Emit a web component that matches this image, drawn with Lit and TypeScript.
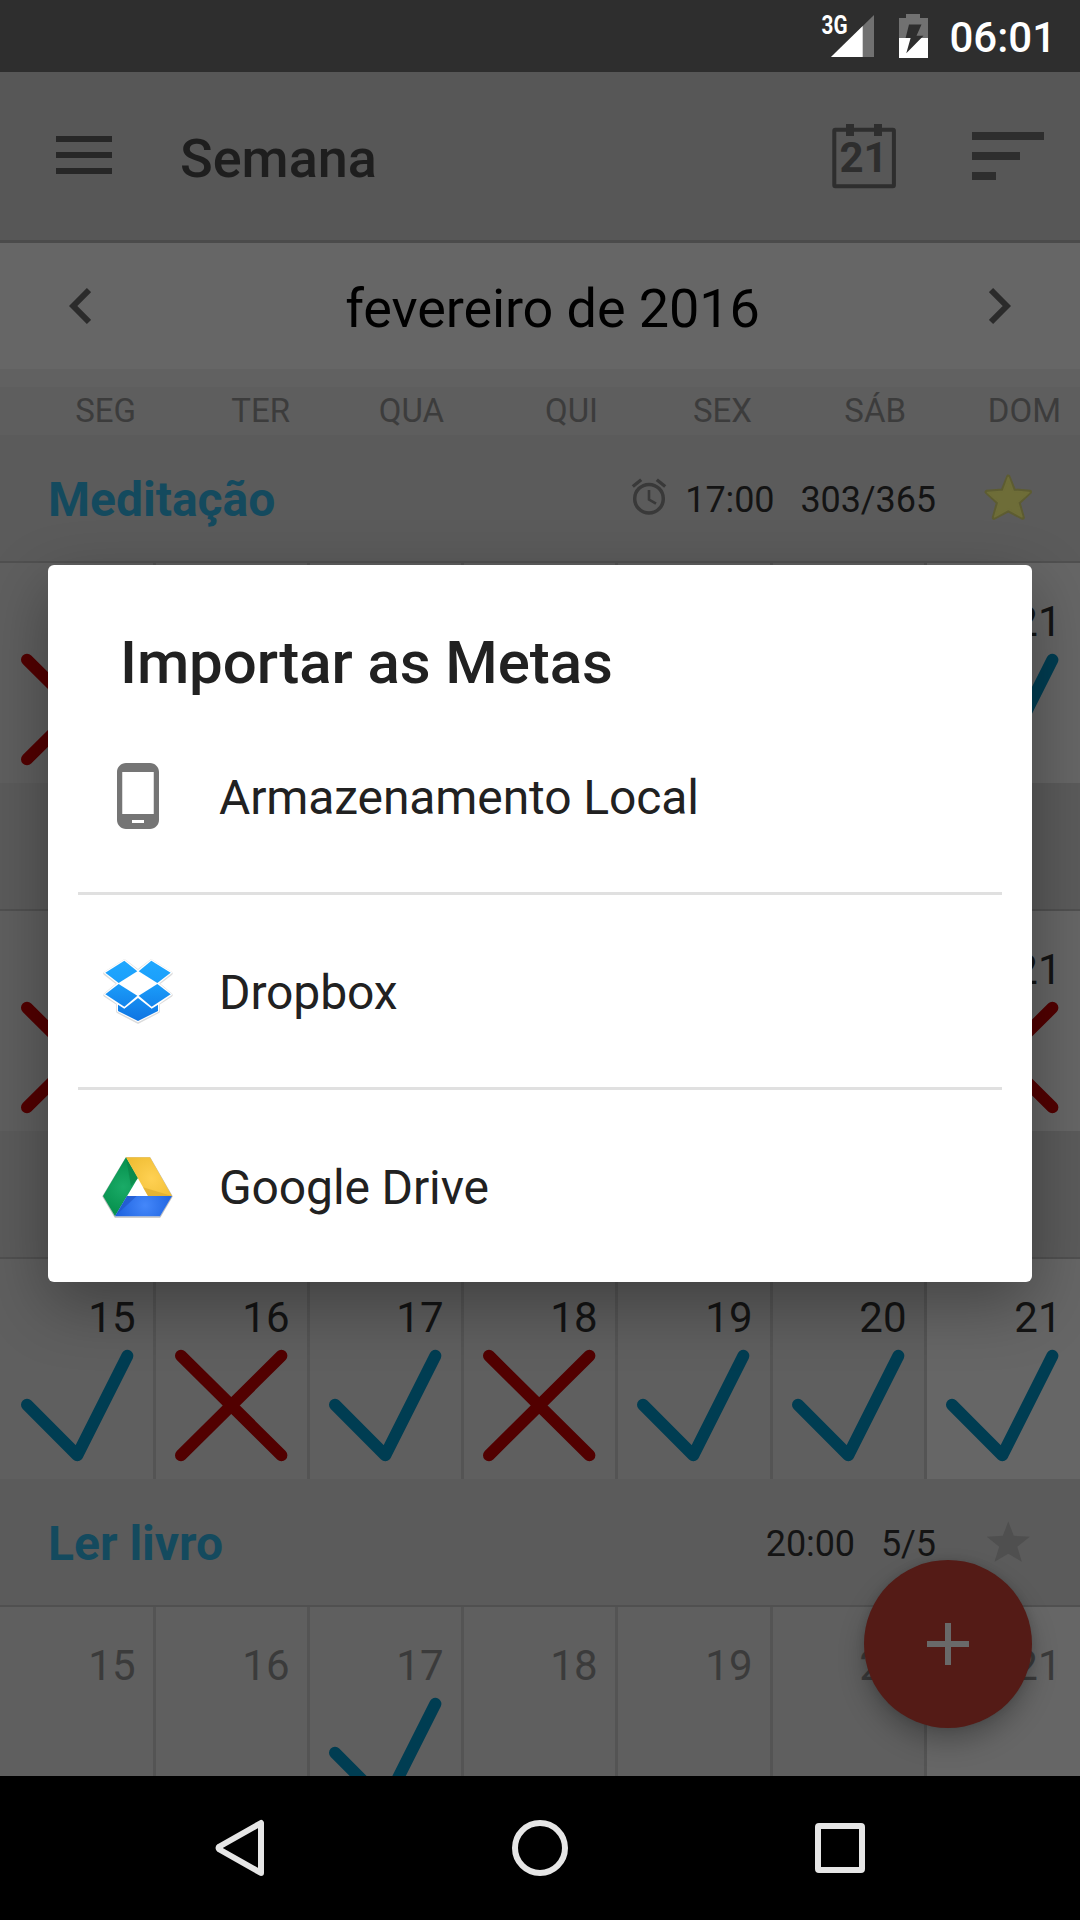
import { LitElement, html, css, svg, nothing } from "lit";
import { customElement, property } from "lit/decorators.js";
import { classMap } from "lit/directives/class-map.js";

type Mark = "check" | "cross" | "none";

interface Day {
  label: string;
  mark: Mark;
}

interface Goal {
  name: string;
  time: string;
  count: string;
  alarm: boolean;
  star: "on" | "off" | "none";
  muted: boolean;
  days: Day[];
}

const day = (label = "", mark: Mark = "none"): Day => ({ label, mark });

const GOALS: Goal[] = [
  {
    name: "Meditação", time: "17:00", count: "303/365", alarm: true, star: "on", muted: false,
    days: [day("", "cross"), day(), day(), day(), day(), day(), day("21", "check")],
  },
  {
    name: "", time: "", count: "", alarm: false, star: "none", muted: false,
    days: [day("", "cross"), day(), day(), day(), day(), day(), day("21", "cross")],
  },
  {
    name: "", time: "", count: "", alarm: false, star: "none", muted: false,
    days: [
      day("15", "check"), day("16", "cross"), day("17", "check"), day("18", "cross"),
      day("19", "check"), day("20", "check"), day("21", "check"),
    ],
  },
  {
    name: "Ler livro", time: "20:00", count: "5/5", alarm: false, star: "off", muted: true,
    days: [day("15"), day("16"), day("17", "check"), day("18"), day("19"), day("20"), day("21")],
  },
];

const WEEKDAYS = ["SEG", "TER", "QUA", "QUI", "SEX", "SÁB", "DOM"];

@customElement("status-bar")
export class StatusBar extends LitElement {
  static styles = css`
    :host { display: flex; height: 72px; flex: none; background: #2e2e2e; color: #fff; justify-content: flex-end;
      align-items: center; box-sizing: border-box; padding-right: 24px; font-family: Roboto, sans-serif; }
    .icons { display: block; width: 110px; height: 72px; margin-right: 19px; }
    .net { font: 700 25px Roboto, sans-serif; fill: #fff; }
    .clock { font-size: 42px; font-weight: 500; line-height: 68px; padding-top: 4px; }
  `;
  render() {
    return html`
      <svg class="icons" viewBox="820 0 110 72">
        <path d="M874 15V57H831Z" fill="#717171" />
        <path d="M862.7 26V57H831Z" fill="#fff" />
        <text class="net" x="821.5" y="33.5" textLength="26" lengthAdjust="spacingAndGlyphs">3G</text>
        <path d="M899 18h7v-4h14v4h8v20h-29z" fill="#717171" />
        <path d="M899 38h29v20h-29z" fill="#fff" />
        <path d="M909 24.5h12.5l-5 11.3h7L906.3 53.3l4.3-15.3h-5z" fill="#2e2e2e" />
      </svg>
      <div class="clock">06:01</div>
    `;
  }
}

@customElement("day-cell")
export class DayCell extends LitElement {
  @property({ attribute: false }) day: Day = day();
  @property({ type: Boolean }) muted = false;
  static styles = css`
    :host { display: block; height: 220px; font-family: Roboto, sans-serif; }
    .number { height: 95px; box-sizing: border-box; padding: 34px 18.5px 0 0; text-align: right;
      font-size: 42px; line-height: 50px; color: #141414; }
    .muted { color: #3b3b3b; }
    .mark { display: block; width: 154px; height: 125px; overflow: visible; fill: none; stroke-width: 12;
      stroke-linecap: round; stroke-linejoin: round; }
    .check { stroke: #003d52; }
    .cross { stroke: #520000; }
  `;
  render() {
    const { label, mark } = this.day;
    return html`
      <div class=${classMap({ number: true, muted: this.muted })}>${label}</div>
      ${mark === "none" ? nothing : html`
        <svg class=${"mark " + mark} viewBox="0 94 154 125">
          ${mark === "check"
            ? svg`<path d="M27 144.7L77.3 195.3L127.4 95.8" />`
            : svg`<path d="M27 95.8L127.4 195.2M127.4 95.8L27 195.2" />`}
        </svg>`}
    `;
  }
}

@customElement("goal-section")
export class GoalSection extends LitElement {
  @property({ attribute: false }) goal!: Goal;
  static styles = css`
    :host { display: block; font-family: Roboto, sans-serif; }
    .head { display: flex; align-items: center; height: 126px; background: #5b5b5b;
      border-bottom: 2px solid #505050; padding: 0 48px; }
    .name { flex: 1; font-size: 48px; font-weight: 700; color: #144a5e; padding-top: 2px; }
    .alarm { width: 36px; height: 40px; margin-right: 18px; }
    .time, .count { font-size: 36px; color: #141414; padding-top: 4px; letter-spacing: -0.1px; }
    .count { margin-left: 26px; }
    .star { width: 48px; height: 48px; margin-left: 48px; padding-top: 2px; overflow: visible; }
    .days { display: grid; grid-template-columns: repeat(4, 154px) 155px 154px 155px; }
    .cell { position: relative; background: #5f5f5f; }
    .cell:last-child { background: #666; }
    .cell:not(:last-child)::after { content: ""; position: absolute; z-index: 1; top: 0; bottom: 0;
      right: -2px; width: 3px; background: #545454; }
  `;
  render() {
    const g = this.goal;
    return html`
      <div class="head">
        <div class="name">${g.name}</div>
        ${g.alarm ? html`
          <svg class="alarm" viewBox="631 478 36 40" fill="none" stroke="#393939">
            <circle cx="649" cy="498.7" r="14.3" stroke-width="3.5" />
            <path d="M649 490v9.5l7 4.2" stroke-width="2.6" />
            <path d="M632.8 486.5l8.4-6.8M665.2 486.5l-8.4-6.8" stroke-width="3.4" />
          </svg>` : nothing}
        <div class="time">${g.time}</div>
        <div class="count">${g.count}</div>
        ${g.star === "none" ? nothing : html`
          <svg class="star" viewBox="0 0 48 48">
            ${g.star === "on"
              ? svg`<path d="M24.3 1.8L29.8 15.6L45.8 17L34.4 27.6L38.6 42.6L24.3 35L10 42.6L14.2 27.6L2.8 17L18.8 15.6Z"
                    fill="#5d5c31" stroke="#5d5c31" stroke-width="4.4" stroke-linejoin="round" />
                  <path d="M24.3 2.6L29.3 16.2L45 17.5L33.7 27.4L37.9 41.8L24.3 34.2L10.7 41.8L14.9 27.4L3.6 17.5L19.3 16.2Z"
                    fill="#6e6d38" stroke="#6e6d38" stroke-width="1.6" stroke-linejoin="round" />`
              : svg`<path d="M24.3 2.5L29.8 16.8L45.8 17.8L33.3 27.7L37.8 42.8L24.3 34.7L10.5 42.8L15.2 27.7L2.8 17.8L18.8 16.8Z"
                  fill="#4f4f4f" />`}
          </svg>`}
      </div>
      <div class="days">
        ${g.days.map((d) => html`<div class="cell"><day-cell .day=${d} ?muted=${g.muted}></day-cell></div>`)}
      </div>
    `;
  }
}

@customElement("import-dialog")
export class ImportDialog extends LitElement {
  static styles = css`
    :host { display: block; width: 984px; height: 717px; background: #fff; border-radius: 6px;
      box-shadow: 0 22px 64px rgba(0, 0, 0, 0.33); color: #212121; font-family: Roboto, sans-serif; }
    .title { height: 135px; box-sizing: border-box; padding: 63px 0 0 72px; font-size: 60px;
      font-weight: 500; line-height: 70px; letter-spacing: -0.08px; }
    .list { padding: 0 30px; }
    .item { display: flex; align-items: center; height: 192px; padding-left: 24px; font-size: 48px;
      letter-spacing: -0.12px; }
    .item + .item { border-top: 3px solid #e0e0e0; }
    .icon { width: 72px; height: 72px; margin-right: 45px; }
    .text { padding-top: 2px; }
  `;
  render() {
    return html`
      <div class="title">Importar as Metas</div>
      <div class="list">
        <div class="item">
          <svg class="icon" viewBox="0 0 24 24">
            <path fill="#757575" d="M16 1H8C6.34 1 5 2.34 5 4v16c0 1.66 1.34 3 3 3h8c1.66 0 3-1.34 3-3V4c0-1.66-1.34-3-3-3zm-2 20h-4v-1h4v1zm3.25-3H6.75V4h10.5v14z" />
          </svg>
          <span class="text">Armazenamento Local</span>
        </div>
        <div class="item">
          <svg class="icon" viewBox="66 645 216 216">
            <defs>
              <linearGradient id="box" gradientUnits="userSpaceOnUse" x1="0" y1="662" x2="0" y2="843">
                <stop offset="0" stop-color="#1fa8ff" />
                <stop offset="0.35" stop-color="#1b9ffb" />
                <stop offset="1" stop-color="#0f74e2" />
              </linearGradient>
            </defs>
            <path fill="none" stroke="#dcdcdc" stroke-width="12" stroke-linejoin="round"
              d="M133 664L174 695L214 664L272 700L232 731L272 765L234 790V814L174 845L114 814V790L76 765L116 731L76 700Z" />
            <path fill="#fff" stroke="#fff" stroke-width="7"
              d="M133 662L174 694L214 662L272 698L232 730L272 763L234 790V812L174 843L114 812V790L76 763L116 730L76 698Z" />
            <g fill="url(#box)">
              <path d="M76 698L133 662L172 694L116 729Z" />
              <path d="M272 698L214 662L176 694L232 729Z" />
              <path d="M76 763L116 732L172 767L133 800Z" />
              <path d="M272 763L232 732L176 767L215 800Z" />
              <path d="M114 794L133 806L174 774L215 806L234 794V813L174 843L114 813Z" />
            </g>
          </svg>
          <span class="text">Dropbox</span>
        </div>
        <div class="item">
          <svg class="icon" viewBox="66 1229 216 216">
            <defs>
              <radialGradient id="green" gradientUnits="userSpaceOnUse" cx="130" cy="1340" r="75">
                <stop offset="0" stop-color="#1aab67" /><stop offset="1" stop-color="#089350" />
              </radialGradient>
              <radialGradient id="yellow" gradientUnits="userSpaceOnUse" cx="215" cy="1315" r="85">
                <stop offset="0" stop-color="#ffd153" /><stop offset="1" stop-color="#f0bd34" />
              </radialGradient>
              <radialGradient id="blue" gradientUnits="userSpaceOnUse" cx="195" cy="1395" r="85">
                <stop offset="0" stop-color="#4487fa" /><stop offset="1" stop-color="#1f64e0" />
              </radialGradient>
            </defs>
            <path fill="none" stroke="#000" stroke-opacity="0.25" stroke-width="4" stroke-linejoin="round"
              d="M138 1253H210L276 1368L240 1430H105L69 1368Z" />
            <path fill="url(#green)" d="M138 1251L174 1312L105 1428L69 1367Z" />
            <path fill="#0a8044" fill-opacity="0.6" d="M138 1251L174 1312L153 1338Z" />
            <path fill="url(#yellow)" d="M138 1251H210L276 1367H204Z" />
            <path fill="#d9a72c" fill-opacity="0.6" d="M189 1341L276 1367H204Z" />
            <path fill="url(#blue)" d="M141 1367H276L240 1428H105Z" />
            <path fill="#1e54c4" fill-opacity="0.6" d="M141 1367H170L105 1428Z" />
          </svg>
          <span class="text">Google Drive</span>
        </div>
      </div>
    `;
  }
}

@customElement("app-root")
export class AppRoot extends LitElement {
  static styles = css`
    :host { display: flex; flex-direction: column; position: relative; width: 1080px; height: 1920px;
      overflow: hidden; background: #5f5f5f; font-family: Roboto, sans-serif; }
    .toolbar { display: flex; align-items: center; height: 168px; flex: none; background: #575757;
      border-bottom: 3px solid #4b4b4b; padding: 0 36px 0 56px; }
    .menu { width: 56px; height: 38px; margin-right: 68px; margin-bottom: 2px; }
    .heading { flex: 1; font-size: 54px; font-weight: 500; color: #1e1e1e; padding-top: 5px; }
    .cal { width: 66px; height: 68px; margin-right: 75px; }
    .caltext { font: 700 42px Roboto, sans-serif; fill: #2e2e2e; }
    .sort { width: 72px; height: 48px; }
    .month { display: flex; align-items: center; height: 126px; flex: none; background: #666;
      padding: 0 69px; }
    .chevron { width: 22px; height: 36px; flex: none; }
    .label { flex: 1; text-align: center; font-size: 54px; letter-spacing: -0.1px; color: #000; padding: 4px 0 0 25px; }
    .strip { height: 18px; flex: none; background: #616161; }
    .weekdays { display: grid; grid-template-columns: repeat(4, 154px) 154px 154px 156px; height: 48px; flex: none;
      background: #5e5e5e; font-size: 33px; line-height: 48px; color: #3c3c3c; text-align: right; }
    .weekday { padding-right: 18px; }
    .weekday:last-child { padding-right: 19px; }
    .goals { flex: 1; min-height: 0; overflow: hidden; }
    .nav { display: flex; justify-content: center; align-items: center; gap: 240px; height: 144px;
      flex: none; background: #000; }
    .navicon { width: 60px; height: 60px; fill: none; stroke: #e6e6e6; stroke-width: 6; stroke-linejoin: round; }
    .fab { position: absolute; left: 864px; top: 1560px; width: 168px; height: 168px; border-radius: 50%;
      background: #541b16; box-shadow: 0 14px 26px rgba(0, 0, 0, 0.25), 0 0 8px rgba(0, 0, 0, 0.12);
      display: flex; align-items: center; justify-content: center; z-index: 2; }
    .plus { width: 42px; height: 42px; }
    .dialog { position: absolute; left: 48px; top: 565px; z-index: 3; }
  `;
  render() {
    return html`
      <status-bar></status-bar>
      <div class="toolbar">
        <svg class="menu" viewBox="0 0 56 38"><path fill="#272727" d="M0 0h56v6H0zM0 16h56v6H0zM0 32h56v6H0z" /></svg>
        <div class="heading">Semana</div>
        <svg class="cal" viewBox="831 122 66 68">
          <rect x="834.3" y="129.7" width="59.6" height="56.5" rx="1" fill="none" stroke="#2e2e2e" stroke-width="4" />
          <path fill="#2e2e2e" d="M846 124h8v12h-8zM874 124h8v12h-8z" />
          <text class="caltext" x="839.5" y="172" textLength="48">21</text>
        </svg>
        <svg class="sort" viewBox="0 0 72 48"><path fill="#2e2e2e" d="M0 0h72v8H0zM0 20h48v8H0zM0 40h24v8H0z" /></svg>
      </div>
      <div class="month">
        <svg class="chevron" viewBox="0 0 22 36"><path fill="none" stroke="#2b2b2b" stroke-width="6" d="M20 2.1L4.2 18L20 33.9" /></svg>
        <div class="label">fevereiro de 2016</div>
        <svg class="chevron" viewBox="0 0 22 36"><path fill="none" stroke="#2b2b2b" stroke-width="6" d="M2 2.1L17.8 18L2 33.9" /></svg>
      </div>
      <div class="strip"></div>
      <div class="weekdays">${WEEKDAYS.map((w) => html`<div class="weekday">${w}</div>`)}</div>
      <div class="goals">${GOALS.map((g) => html`<goal-section .goal=${g}></goal-section>`)}</div>
      <div class="nav">
        <svg class="navicon" viewBox="210 1818 60 60"><path d="M261 1823V1873L219.5 1849.5Q217.5 1848 219.5 1846.5Z" /></svg>
        <svg class="navicon" viewBox="510 1818 60 60"><circle cx="540" cy="1848" r="25" /></svg>
        <svg class="navicon" viewBox="810 1818 60 60"><rect x="818" y="1826" width="44" height="44" rx="1" /></svg>
      </div>
      <div class="fab">
        <svg class="plus" viewBox="0 0 42 42"><path fill="#696969" d="M18 0h6v18h18v6H24v18h-6V24H0v-6h18z" /></svg>
      </div>
      <import-dialog class="dialog"></import-dialog>
    `;
  }
}
